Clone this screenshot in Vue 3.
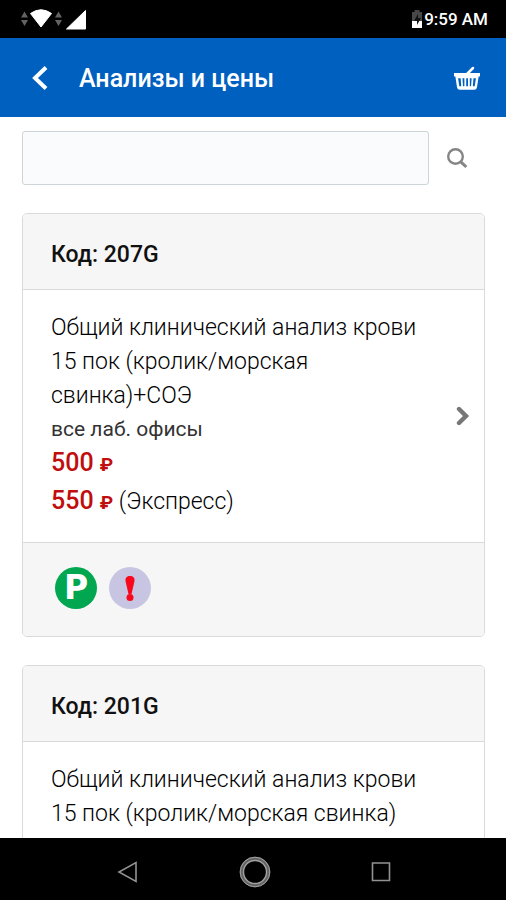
<script setup>
import { ref } from 'vue'

const query = ref('')
const items = [
  {
    code: '207G',
    lines: ['Общий клинический анализ крови', '15 пок (кролик/морская', 'свинка)+СОЭ'],
    offices: 'все лаб. офисы',
    price: 500,
    express: 550,
  },
  {
    code: '201G',
    lines: ['Общий клинический анализ крови', '15 пок (кролик/морская свинка)'],
    offices: 'все лаб. офисы',
  },
]
</script>

<template>
  <div class="screen">
    <div class="status">
      <svg class="signals" viewBox="0 0 68 24" aria-hidden="true">
        <path d="M1 10.500 4.500 4.500 8 10.500ZM1 13 4.500 19 8 13Z" fill="#626262" />
        <path d="M10.500 5.500Q21 -2 31.500 5.500L21 19Z" fill="#fff" transform="translate(0 1)" stroke="#fff" stroke-linejoin="round" />
        <path d="M35 10.500 38.500 4.500 42 10.500ZM35 13 38.500 19 42 13Z" fill="#626262" />
        <path d="M46.500 22 65.500 3.500V22Z" fill="#fff" stroke="#fff" stroke-linejoin="round" />
      </svg>
      <div class="clock">
        <svg class="battery" viewBox="0 0 12 20" aria-hidden="true">
          <path d="M3.500 1h5v2H11v16H1V3h2.500Z" fill="#484848" />
          <path d="M1 12h10v7H1Z" fill="#fff" />
          <path d="M7 5 3 12h3v4l4-7H7Z" fill="#111" />
        </svg>
        <span>9:59 AM</span>
      </div>
    </div>

    <header class="bar">
      <button class="icon-btn" type="button" aria-label="Назад">
        <svg class="back" viewBox="0 0 18 26"><path d="M15 2.500 4 13 15 23.500" fill="none" stroke="#fff" stroke-width="4" /></svg>
      </button>
      <h1>Анализы и цены</h1>
      <button class="icon-btn" type="button" aria-label="Корзина">
        <svg class="basket" viewBox="0 0 28 24">
          <path d="M14 8 20 2" stroke="#fff" stroke-width="2.500" stroke-linecap="round" />
          <path d="M1 7H27V10.500H1Z" fill="#fff" />
          <path d="M3.500 10 5.200 21Q5.400 22.500 7 22.500H21Q22.600 22.500 22.800 21L24.500 10" fill="none" stroke="#fff" stroke-width="2.400" />
          <path d="M4 11H24M6 21.500H22" stroke="#fff" stroke-width="2.500" />
          <path d="M8.500 11.500 9.200 21M12.300 11.500V21M15.900 11.500V21M19.600 11.500 18.900 21" stroke="#fff" stroke-width="1.800" />
        </svg>
      </button>
    </header>

    <main class="content">
      <form class="search" @submit.prevent>
        <input v-model="query" type="text" aria-label="Поиск анализа" />
        <button class="icon-btn" type="submit" aria-label="Найти">
          <svg class="lens" viewBox="0 0 22 22" fill="none" stroke="#858585">
            <circle cx="9.500" cy="9.500" r="7.300" stroke-width="2.400" />
            <path d="M14.800 14.800 20.300 20" stroke-width="3" />
          </svg>
        </button>
      </form>

      <article v-for="item in items" :key="item.code" class="card">
        <h2>Код: {{ item.code }}</h2>
        <div class="info">
          <div class="text">
            <p v-for="line in item.lines" :key="line" class="name">{{ line }}</p>
            <p class="offices">{{ item.offices }}</p>
            <p v-if="item.price" class="price"><b>{{ item.price }} <span class="rub">₽</span></b></p>
            <p v-if="item.express" class="price"><b>{{ item.express }} <span class="rub">₽</span></b> (Экспресс)</p>
          </div>
          <svg v-if="item.price" class="more" viewBox="0 0 14 20"><path d="M3 3 10 10 3 17" fill="none" stroke="#777" stroke-width="4.400" stroke-linecap="round" stroke-linejoin="miter" /></svg>
        </div>
        <footer v-if="item.price" class="badges">
          <span class="badge park">P</span>
          <span class="badge alert">
            <svg viewBox="0 0 42 42" aria-hidden="true">
              <path d="M21 9C25 9 26 11.500 25.300 15L22.500 27H19.500L16.700 15C16 11.500 17 9 21 9Z" fill="#f8081a" />
              <circle cx="21" cy="30.500" r="3.500" fill="#f8081a" />
            </svg>
          </span>
        </footer>
      </article>
    </main>

    <nav class="nav">
      <button class="icon-btn" type="button" aria-label="Назад">
        <svg viewBox="0 0 34 34" fill="none" stroke="#929292" stroke-width="1.600"><path d="M25 7.500V26.500L8 17Z" /></svg>
      </button>
      <button class="icon-btn" type="button" aria-label="Домой">
        <svg viewBox="0 0 34 34" fill="none">
          <circle cx="17" cy="17" r="13.300" stroke="#626262" stroke-width="4" />
          <circle cx="17" cy="17" r="14.800" stroke="#a0a0a0" />
          <circle cx="17" cy="17" r="11.500" stroke="#a0a0a0" stroke-width="1.400" />
        </svg>
      </button>
      <button class="icon-btn" type="button" aria-label="Недавние">
        <svg viewBox="0 0 34 34" fill="none" stroke="#929292" stroke-width="1.600"><path d="M8.500 8H25.500V25.500H8.500Z" /></svg>
      </button>
    </nav>
  </div>
</template>

<style>
body {
  margin: 0;
}
</style>

<style scoped>
.screen {
  display: flex;
  flex-direction: column;
  height: 100vh;
  overflow: hidden;
  background: #fff;
  color: #000;
  font-family: Roboto, "Liberation Sans", sans-serif;
}
h1,
h2,
p {
  margin: 0;
}
svg {
  display: block;
}
.icon-btn {
  display: flex;
  padding: 0;
  border: 0;
  background: none;
}
.status {
  display: flex;
  flex: none;
  align-items: center;
  justify-content: space-between;
  box-sizing: border-box;
  height: 38px;
  padding: 0 18px 0 20px;
  background: #000;
  color: #fff;
}
.signals {
  width: 68px;
  height: 24px;
}
.clock {
  display: flex;
  align-items: center;
  gap: 1px;
  font-size: 17px;
  font-weight: 500;
}
.battery {
  width: 12px;
  height: 20px;
}
.bar {
  display: flex;
  flex: none;
  align-items: center;
  box-sizing: border-box;
  height: 79px;
  padding: 0 25px 0 31px;
  background: #0060c0;
  color: #fff;
}
.back {
  width: 18px;
  height: 26px;
}
h1 {
  flex: 1;
  padding: 2px 0 0 30px;
  font-size: 25px;
  font-weight: 500;
  line-height: 32px;
}
.basket {
  width: 28px;
  height: 24px;
}
.content {
  flex: 1;
  min-height: 0;
  overflow: hidden;
  padding: 14px 21px 0 22px;
}
.search {
  display: flex;
  align-items: center;
  gap: 17px;
  padding-right: 17px;
}
.search input {
  flex: 1;
  min-width: 0;
  box-sizing: border-box;
  height: 54px;
  padding: 0 14px;
  border: 1px solid #cdd5d8;
  border-radius: 3px;
  background: #f9fbfd;
  font: inherit;
  font-size: 23px;
}
.lens {
  width: 22px;
  height: 22px;
}
.card {
  margin-top: 28px;
  overflow: hidden;
  border: 1px solid #dadada;
  border-radius: 5px;
}
h2 {
  padding: 25px 28px 18px;
  border-bottom: 1px solid #dadada;
  background: #f6f6f6;
  color: #111;
  font-size: 23px;
  font-weight: 500;
  line-height: 32px;
}
.info {
  display: flex;
  align-items: center;
  padding: 21px 14px 21px 28px;
}
.text {
  flex: 1;
}
.name {
  font-size: 23px;
  font-weight: 300;
  line-height: 34px;
  white-space: nowrap;
}
.offices {
  color: #333;
  font-size: 21px;
  line-height: 32px;
}
.price {
  height: 38px;
  font-size: 23px;
  font-weight: 300;
  line-height: 38px;
}
.price b {
  color: #c00d0d;
  font-size: 25px;
  font-weight: 500;
  line-height: 1;
}
.price .rub {
  font-size: 19px;
  font-weight: 700;
  line-height: 1;
}
.more {
  width: 14px;
  height: 20px;
}
.badges {
  display: flex;
  gap: 12px;
  padding: 24px 32px 27px;
  border-top: 1px solid #dadada;
  background: #f6f6f6;
}
.badge {
  width: 42px;
  height: 42px;
  border-radius: 50%;
  text-align: center;
}
.park {
  background: #00a650;
  color: #fff;
  font: 700 33px/42px "DejaVu Sans", sans-serif;
}
.alert {
  background: #c8c5e3;
}
.nav {
  display: flex;
  flex: none;
  align-items: center;
  justify-content: space-between;
  box-sizing: border-box;
  height: 62px;
  padding: 6px 108px 0 111px;
  background: #000;
}
.nav svg {
  width: 34px;
  height: 34px;
}
</style>
